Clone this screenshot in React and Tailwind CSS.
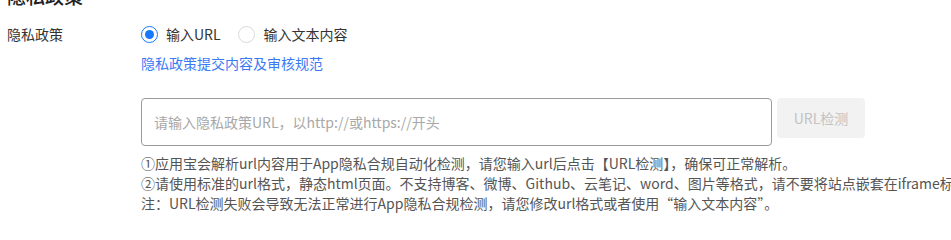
export default function App() {
  return (
    <div
      className="w-[951px] h-[219px] overflow-hidden bg-white text-[14px] text-[#333]"
      style={{ fontFamily: '"Noto Sans CJK SC", "Noto Sans", sans-serif' }}
    >
      <div className="h-[7px] overflow-hidden pl-[7px]">
        <div className="-mt-[16px] text-[19px] leading-[24px] font-medium text-[#222]">隐私政策</div>
      </div>
      <div className="flex pt-[17px]">
        <div className="w-[141px] shrink-0 pl-[7px] leading-[20px]">隐私政策</div>
        <div className="flex-1 min-w-0">
          <div className="flex items-center h-[20px] leading-[20px]">
            <label className="flex items-center gap-[8px] mr-[17px]">
              <span className="w-[17px] h-[17px] rounded-full border border-[#1677ff] flex items-center justify-center">
                <span className="w-[9px] h-[9px] rounded-full bg-[#1677ff]" />
              </span>
              <span>输入URL</span>
            </label>
            <label className="flex items-center gap-[9px]">
              <span className="w-[17px] h-[17px] rounded-full border border-[#d9d9d9] bg-white" />
              <span>输入文本内容</span>
            </label>
          </div>
          <div className="mt-[9px] leading-[20px] text-[#3a7af5]">隐私政策提交内容及审核规范</div>
          <div className="mt-[25px] flex items-start gap-[5px]">
            <div className="w-[631px] h-[48px] rounded-[4px] border border-[#9a9a9a] flex items-center px-[12px] text-[#a8a8a8]">
              请输入隐私政策URL，以http://或https://开头
            </div>
            <button className="w-[88px] h-[40px] rounded-[4px] bg-[#f2f2f2] text-[#c2c2c2] text-[14px]">URL检测</button>
          </div>
          <div className="mt-[7px] text-[#555] leading-[20px] whitespace-nowrap">
            <div>①应用宝会解析url内容用于App隐私合规自动化检测，请您输入url后点击【URL检测】，确保可正常解析。</div>
            <div>②请使用标准的url格式，静态html页面。不支持博客、微博、Github、云笔记、word、图片等格式，请不要将站点嵌套在iframe标签中。</div>
            <div>注：URL检测失败会导致无法正常进行App隐私合规检测，请您修改url格式或者使用“输入文本内容”。</div>
          </div>
        </div>
      </div>
    </div>
  );
}
